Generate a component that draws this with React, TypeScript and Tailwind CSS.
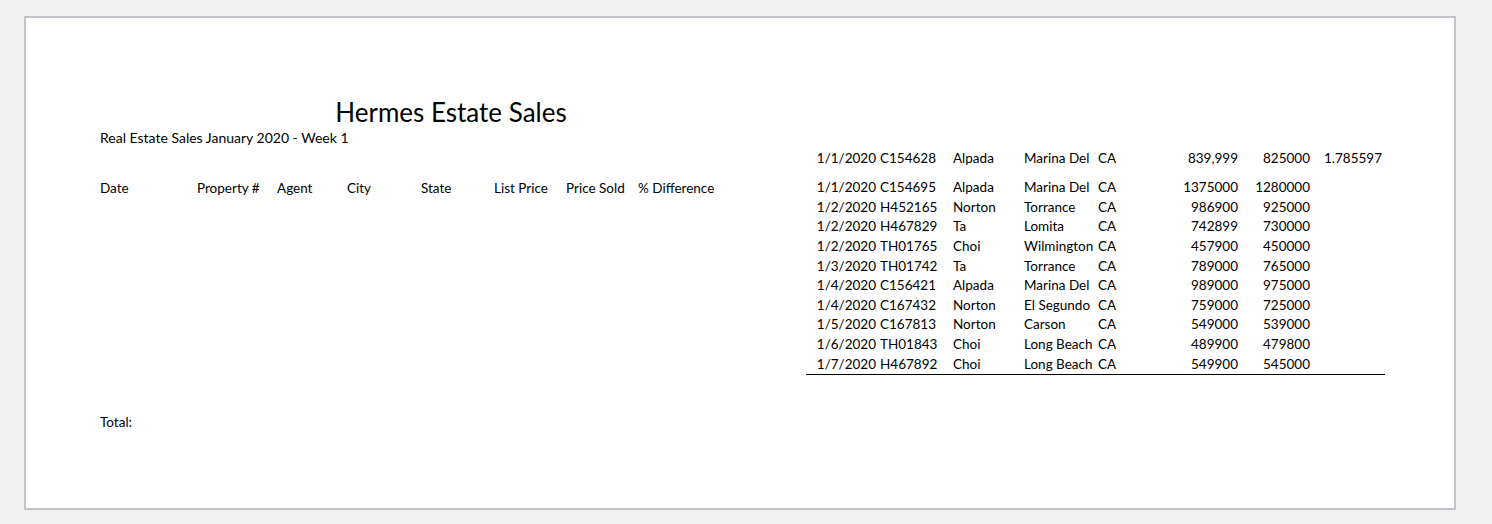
import React from "react";

const font = { fontFamily: "Lato, 'Open Sans', sans-serif" };

const headers = [
  { label: "Date", w: "w-[97px]" },
  { label: "Property #", w: "w-[80px]" },
  { label: "Agent", w: "w-[70px]" },
  { label: "City", w: "w-[74px]" },
  { label: "State", w: "w-[73px]" },
  { label: "List Price", w: "w-[72px]" },
  { label: "Price Sold", w: "w-[72px]" },
  { label: "% Difference", w: "w-[90px]" },
];

const sales = [
  ["1/1/2020", "C154695", "Alpada", "Marina Del", "CA", "1375000", "1280000"],
  ["1/2/2020", "H452165", "Norton", "Torrance", "CA", "986900", "925000"],
  ["1/2/2020", "H467829", "Ta", "Lomita", "CA", "742899", "730000"],
  ["1/2/2020", "TH01765", "Choi", "Wilmington", "CA", "457900", "450000"],
  ["1/3/2020", "TH01742", "Ta", "Torrance", "CA", "789000", "765000"],
  ["1/4/2020", "C156421", "Alpada", "Marina Del", "CA", "989000", "975000"],
  ["1/4/2020", "C167432", "Norton", "El Segundo", "CA", "759000", "725000"],
  ["1/5/2020", "C167813", "Norton", "Carson", "CA", "549000", "539000"],
  ["1/6/2020", "TH01843", "Choi", "Long Beach", "CA", "489900", "479800"],
  ["1/7/2020", "H467892", "Choi", "Long Beach", "CA", "549900", "545000"],
];

function Row({ cells, pct }: { cells: string[]; pct?: string }) {
  const [date, prop, agent, city, state, list, sold] = cells;
  return (
    <div className="flex h-[19.6px] items-center whitespace-nowrap">
      <div className="w-[72px] pr-[2px] text-right">{date}</div>
      <div className="w-[72px] pl-[2px]">{prop}</div>
      <div className="w-[72px] pl-[3px]">{agent}</div>
      <div className="w-[74px] overflow-hidden pl-[2px]">{city}</div>
      <div className="w-[72px] pl-[2px]">{state}</div>
      <div className="w-[72px] pr-[2px] text-right">{list}</div>
      <div className="w-[72px] pr-[2px] text-right">{sold}</div>
      <div className="w-[73px] pr-[3px] text-right">{pct ?? ""}</div>
    </div>
  );
}

export default function App() {
  return (
    <div className="h-[524px] w-full bg-[#f1f1f1] pl-[24px] pt-[16px]" style={font}>
      <div className="flex h-[494px] w-[1432px] border-2 border-[#c1c5ca] bg-white pl-[72px] text-[13.5px] text-black">
        <div className="flex w-[708px] flex-col pl-[2px]">
          <div className="mt-[80px] w-[702px] text-center text-[26px] leading-[28px]">
            Hermes Estate Sales
          </div>
          <div className="mt-[2px] text-[14px] leading-[20px]">
            Real Estate Sales January 2020 - Week 1
          </div>
          <div className="mt-[30px] flex h-[20px] items-center whitespace-nowrap">
            {headers.map((h) => (
              <div key={h.label} className={h.w}>
                {h.label}
              </div>
            ))}
          </div>
          <div className="mt-[214px] leading-[20px]">Total:</div>
        </div>
        <div className="w-[579px] pt-[130px]">
          <Row
            cells={["1/1/2020", "C154628", "Alpada", "Marina Del", "CA", "839,999", "825000"]}
            pct="1.785597"
          />
          <div className="mt-[10px] border-b border-black">
            {sales.map((r, i) => (
              <Row key={i} cells={r} />
            ))}
          </div>
        </div>
      </div>
    </div>
  );
}
